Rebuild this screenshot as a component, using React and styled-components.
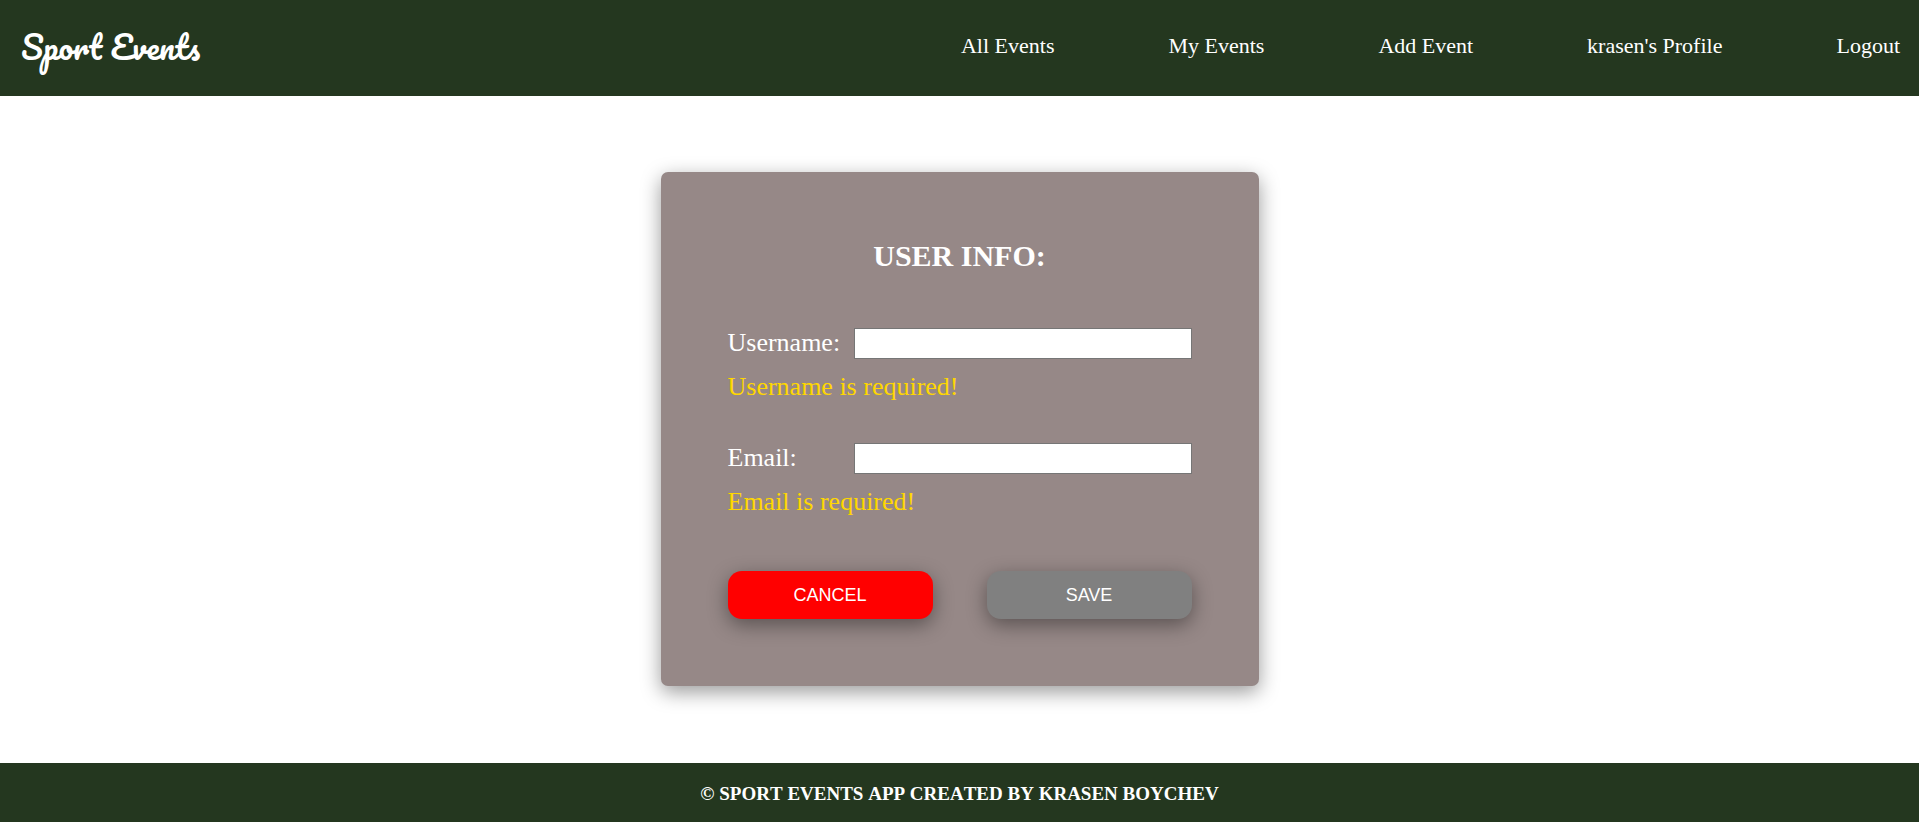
import React from "react";
import styled, { createGlobalStyle } from "styled-components";

const GlobalStyle = createGlobalStyle`
  *, *::before, *::after { box-sizing: border-box; }
  body {
    margin: 0;
    background: #fff;
    color: #fff;
    font-family: "Times New Roman", "Liberation Serif", serif;
  }
`;

const raised = "0 6px 20px rgba(0, 0, 0, 0.4)";

const Page = styled.div`
  min-height: 100vh;
  display: flex;
  flex-direction: column;
`;

const Header = styled.header`
  display: flex;
  justify-content: space-between;
  align-items: center;
  min-height: 96px;
  padding: 0 19px 4px 21px;
  background: #24371f;
`;

const Logo = styled.a`
  color: #fff;
  font-family: Pacifico, cursive;
  font-size: 32px;
  line-height: 40px;
  text-decoration: none;
  white-space: nowrap;
`;

const Nav = styled.nav`
  display: flex;
  gap: 114px;
`;

const NavLink = styled.a`
  color: #fff;
  font-size: 22px;
  line-height: 26px;
  text-decoration: none;
  white-space: nowrap;
`;

const Main = styled.main`
  flex: 1;
  display: flex;
  justify-content: center;
  align-items: center;
  padding: 40px 20px 41px;
`;

const Card = styled.form`
  width: 100%;
  max-width: 598px;
  padding: 67px;
  border-radius: 7px;
  background: #968887;
  box-shadow: ${raised};
`;

const Title = styled.h1`
  margin: 0 0 55px;
  font-size: 30px;
  line-height: 34px;
  text-align: center;
`;

const Field = styled.div`
  & + & { margin-top: 40px; }
`;

const FieldRow = styled.div`
  display: flex;
  justify-content: space-between;
  align-items: flex-start;
  margin-bottom: 12px;
`;

const Label = styled.label`
  font-size: 26px;
  line-height: 30px;
`;

const Input = styled.input`
  width: 338px;
  height: 31px;
  padding: 1px 4px;
  border: 1px solid #767676;
  border-radius: 0;
  background: #fff;
  font-size: 22px;
`;

const FieldError = styled.p`
  margin: 0;
  color: #ffd700;
  font-size: 26px;
  line-height: 32px;
`;

const Actions = styled.div`
  display: grid;
  grid-template-columns: 1fr 1fr;
  gap: 54px;
  margin-top: 53px;
`;

const Button = styled.button`
  height: 48px;
  padding: 0;
  border: 0;
  border-radius: 14px;
  background: ${({ $tone }) => $tone};
  color: #fff;
  font-family: Arial, "Liberation Sans", sans-serif;
  font-size: 18px;
  box-shadow: ${raised};
  cursor: pointer;
`;

const Footer = styled.footer`
  display: flex;
  justify-content: center;
  align-items: center;
  min-height: 59px;
  padding-top: 3px;
  background: #24371f;
  font-size: 19px;
  font-weight: 700;
  line-height: 22px;
  font-kerning: none;
`;

const links = ["All Events", "My Events", "Add Event", "krasen's Profile", "Logout"];

const fields = [
  { id: "username", label: "Username:", type: "text", error: "Username is required!" },
  { id: "email", label: "Email:", type: "email", error: "Email is required!" },
];

export default function App() {
  return (
    <Page>
      <GlobalStyle />
      <Header>
        <Logo href="#">Sport Events</Logo>
        <Nav>
          {links.map((text) => (
            <NavLink key={text} href="#">{text}</NavLink>
          ))}
        </Nav>
      </Header>
      <Main>
        <Card noValidate onSubmit={(e) => e.preventDefault()}>
          <Title>USER INFO:</Title>
          {fields.map(({ id, label, type, error }) => (
            <Field key={id}>
              <FieldRow>
                <Label htmlFor={id}>{label}</Label>
                <Input id={id} name={id} type={type} aria-describedby={`${id}-error`} />
              </FieldRow>
              <FieldError id={`${id}-error`}>{error}</FieldError>
            </Field>
          ))}
          <Actions>
            <Button type="button" $tone="#ff0000">CANCEL</Button>
            <Button type="submit" $tone="#808080">SAVE</Button>
          </Actions>
        </Card>
      </Main>
      <Footer>© SPORT EVENTS APP CREATED BY KRASEN BOYCHEV</Footer>
    </Page>
  );
}
